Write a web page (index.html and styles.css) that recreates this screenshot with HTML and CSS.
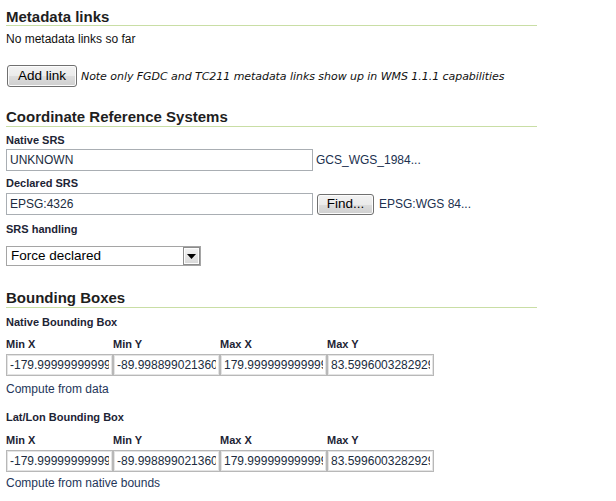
FILE: index.html
```html
<!DOCTYPE html>
<html>
<head>
<meta charset="utf-8">
<link rel="stylesheet" href="styles.css">
</head>
<body>
<section class="sec sec-meta">
  <h2 class="sec-title">Metadata links</h2>
  <p class="plain">No metadata links so far</p>
  <div class="row addrow">
    <button class="btn btn-add">Add link</button>
    <span class="note">Note only FGDC and TC211 metadata links show up in WMS 1.1.1 capabilities</span>
  </div>
</section>

<section class="sec sec-crs">
  <h2 class="sec-title">Coordinate Reference Systems</h2>
  <div class="lbl lbl-native">Native SRS</div>
  <div class="row fieldrow">
    <input class="txt txt-srs" type="text" value="UNKNOWN">
    <span class="srsname">GCS_WGS_1984...</span>
  </div>
  <div class="lbl lbl-declared">Declared SRS</div>
  <div class="row fieldrow fieldrow-decl">
    <input class="txt txt-srs" type="text" value="EPSG:4326">
    <button class="btn btn-find">Find...</button>
    <span class="srsname srsname-decl">EPSG:WGS 84...</span>
  </div>
  <div class="lbl lbl-handling">SRS handling</div>
  <div class="select">
    <span class="select-value">Force declared</span>
    <span class="select-arrow"><svg width="9" height="5" viewBox="0 0 9 5"><path d="M0 0H9L4.5 5Z" fill="#000"/></svg></span>
  </div>
</section>

<section class="sec sec-bbox">
  <h2 class="sec-title">Bounding Boxes</h2>
  <div class="lbl lbl-box">Native Bounding Box</div>
  <div class="bbox">
    <div class="lbl col">Min X</div><div class="lbl col">Min Y</div><div class="lbl col">Max X</div><div class="lbl col">Max Y</div>
    <input class="txt txt-bb" type="text" value="-179.99999999999997">
    <input class="txt txt-bb" type="text" value="-89.99889902136009">
    <input class="txt txt-bb" type="text" value="179.99999999999997">
    <input class="txt txt-bb" type="text" value="83.59960032829294">
  </div>
  <div class="link">Compute from data</div>

  <div class="lbl lbl-box lbl-box2">Lat/Lon Bounding Box</div>
  <div class="bbox bbox2">
    <div class="lbl col">Min X</div><div class="lbl col">Min Y</div><div class="lbl col">Max X</div><div class="lbl col">Max Y</div>
    <input class="txt txt-bb" type="text" value="-179.99999999999997">
    <input class="txt txt-bb" type="text" value="-89.99889902136009">
    <input class="txt txt-bb" type="text" value="179.99999999999997">
    <input class="txt txt-bb" type="text" value="83.59960032829294">
  </div>
  <div class="link link2">Compute from native bounds</div>
</section>
</body>
</html>
```

FILE: styles.css
```css
html, body {
  margin: 0;
  padding: 0;
  background: #fff;
}
body {
  padding: 0 6px;
  font-family: "Liberation Sans", Arial, sans-serif;
  font-size: 12px;
  color: #1a1a1a;
  width: 531px;
}
.sec-title {
  margin: 0;
  font-size: 15px;
  line-height: 17px;
  font-weight: bold;
  color: #1e1e1e;
  border-bottom: 1px solid #c9dea5;
}
.sec-meta .sec-title { margin-top: 8px; padding-bottom: 0; }
.sec-crs .sec-title { margin-top: 21px; padding-bottom: 1px; }
.sec-bbox .sec-title { margin-top: 23px; padding-bottom: 1px; }

.plain {
  margin: 6px 0 0;
  line-height: 14px;
  color: #111;
}
.row {
  display: flex;
  align-items: center;
}
.addrow { margin-top: 19px; }

.btn {
  font-family: "Liberation Sans", Arial, sans-serif;
  font-size: 13.5px;
  color: #000;
  height: 22px;
  padding: 0 0 1px;
  border: 1px solid #707070;
  border-radius: 3px;
  background: linear-gradient(#f2f2f2 0%, #ebebeb 50%, #dddddd 51%, #cfcfcf 100%);
  box-shadow: inset 0 0 0 1px #fcfcfc;
  margin: 0;
}
.btn-add { width: 70px; margin-left: 1px; }
.note {
  margin-left: 4px;
  font-family: "DejaVu Sans", Verdana, sans-serif;
  font-style: italic;
  font-size: 11px;
  letter-spacing: -0.05px;
  color: #111;
}

.lbl {
  font-size: 11px;
  line-height: 13px;
  font-weight: bold;
  color: #1d2435;
}
.lbl-native { margin-top: 7px; }
.lbl-declared { margin-top: 6px; }
.lbl-handling { margin-top: 8px; }

.fieldrow { margin-top: 2px; }
.fieldrow-decl { margin-top: 3px; }

.txt {
  box-sizing: border-box;
  height: 22px;
  margin: 0;
  padding: 0 3px;
  border: 1px solid #a9aeb3;
  font-family: "Liberation Sans", Arial, sans-serif;
  font-size: 12px;
  color: #202c40;
  background: #fff;
  outline: none;
}
.txt-srs { width: 307px; }
.srsname {
  margin-left: 3px;
  color: #20304f;
}
.btn-find {
  width: 57px;
  height: 21px;
  margin-left: 4px;
  font-size: 13.5px;
}
.srsname-decl { margin-left: 5px; }

.select {
  box-sizing: border-box;
  display: flex;
  align-items: stretch;
  width: 195px;
  height: 20px;
  margin-top: 10px;
  border: 1px solid #a5a5a5;
  background: #fff;
}
.select-value {
  flex: 1;
  padding-left: 4px;
  font-size: 13.5px;
  line-height: 18px;
  color: #000;
}
.select-arrow {
  box-sizing: border-box;
  width: 17px;
  display: flex;
  align-items: center;
  justify-content: center;
  border: 1px solid #8c8c8c;
  background: linear-gradient(#f4f4f4, #d8d8d8);
  box-shadow: inset 0 0 0 1px #fdfdfd;
}

.lbl-box { margin-top: 8px; }
.lbl-box2 { margin-top: 15px; }
.bbox {
  display: grid;
  grid-template-columns: repeat(4, 107px);
  margin-top: 9px;
}
.bbox2 { margin-top: 10px; }
.col { margin-bottom: 3px; }
.txt-bb {
  width: 107px;
  border: 1px solid #b8b8b8;
  box-shadow: inset 0 0 0 1px #e4e4e4;
}
.link {
  margin-top: 6px;
  line-height: 14px;
  color: #24365a;
}
.link2 { margin-top: 4px; }
```
